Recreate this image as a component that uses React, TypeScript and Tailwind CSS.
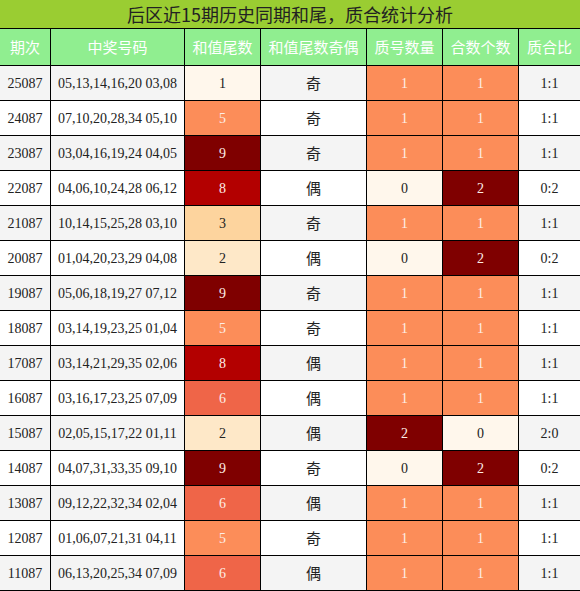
import React from "react";

type Row = {
  issue: string;
  nums: string;
  tail: number;
  parity: string;
  prime: number;
  comp: number;
};

const rows: Row[] = [
  { issue: "25087", nums: "05,13,14,16,20 03,08", tail: 1, parity: "奇", prime: 1, comp: 1 },
  { issue: "24087", nums: "07,10,20,28,34 05,10", tail: 5, parity: "奇", prime: 1, comp: 1 },
  { issue: "23087", nums: "03,04,16,19,24 04,05", tail: 9, parity: "奇", prime: 1, comp: 1 },
  { issue: "22087", nums: "04,06,10,24,28 06,12", tail: 8, parity: "偶", prime: 0, comp: 2 },
  { issue: "21087", nums: "10,14,15,25,28 03,10", tail: 3, parity: "奇", prime: 1, comp: 1 },
  { issue: "20087", nums: "01,04,20,23,29 04,08", tail: 2, parity: "偶", prime: 0, comp: 2 },
  { issue: "19087", nums: "05,06,18,19,27 07,12", tail: 9, parity: "奇", prime: 1, comp: 1 },
  { issue: "18087", nums: "03,14,19,23,25 01,04", tail: 5, parity: "奇", prime: 1, comp: 1 },
  { issue: "17087", nums: "03,14,21,29,35 02,06", tail: 8, parity: "偶", prime: 1, comp: 1 },
  { issue: "16087", nums: "03,16,17,23,25 07,09", tail: 6, parity: "偶", prime: 1, comp: 1 },
  { issue: "15087", nums: "02,05,15,17,22 01,11", tail: 2, parity: "偶", prime: 2, comp: 0 },
  { issue: "14087", nums: "04,07,31,33,35 09,10", tail: 9, parity: "奇", prime: 0, comp: 2 },
  { issue: "13087", nums: "09,12,22,32,34 02,04", tail: 6, parity: "偶", prime: 1, comp: 1 },
  { issue: "12087", nums: "01,06,07,21,31 04,11", tail: 5, parity: "奇", prime: 1, comp: 1 },
  { issue: "11087", nums: "06,13,20,25,34 07,09", tail: 6, parity: "偶", prime: 1, comp: 1 },
];

// OrRd scale, one class per tail digit
const tailColor: Record<number, string> = {
  0: "bg-[#fff7ec] text-[#222]",
  1: "bg-[#fff7ec] text-[#222]",
  2: "bg-[#fee8c8] text-[#222]",
  3: "bg-[#fdd49e] text-[#222]",
  4: "bg-[#fdbb84] text-[#222]",
  5: "bg-[#fc8d59] text-[#fdeee6]",
  6: "bg-[#ef6548] text-[#fdeee6]",
  7: "bg-[#d7301f] text-[#fdeee6]",
  8: "bg-[#b30000] text-[#fdeee6]",
  9: "bg-[#7f0000] text-[#fdeee6]",
};

const countColor: Record<number, string> = {
  0: "bg-[#fff7ec] text-[#222]",
  1: "bg-[#fc8d59] text-[#fdeee6]",
  2: "bg-[#7f0000] text-[#fdeee6]",
};

const headers = ["期次", "中奖号码", "和值尾数", "和值尾数奇偶", "质号数量", "合数个数", "质合比"];

const serif = "font-['Liberation_Serif','Noto_Sans_CJK_SC',serif]";
const sans = "font-['Noto_Sans_CJK_SC','Noto_Sans',sans-serif]";

const App = () => {
  return (
    <div className="w-[580px] h-[591px] bg-black flex flex-col gap-px">
      <div
        className={`h-[28px] bg-[#9acd32] flex items-center justify-center text-[18px] text-[#222] ${sans}`}
      >
        后区近15期历史同期和尾，质合统计分析
      </div>

      <div className="grid grid-cols-[50px_133px_75px_105px_75px_75px_61px] gap-px">
        {headers.map((h) => (
          <div
            key={h}
            className={`h-[36px] bg-[#90ee90] text-white text-[15px] flex items-center justify-center ${sans}`}
          >
            {h}
          </div>
        ))}
      </div>

      {rows.map((r, i) => {
        const stripe = i % 2 === 0 ? "bg-[#f4f4f4]" : "bg-white";
        const cell = "h-[34px] flex items-center justify-center";
        return (
          <div
            key={r.issue}
            className={`grid grid-cols-[50px_133px_75px_105px_75px_75px_61px] gap-px text-[14px] text-[#222] ${serif}`}
          >
            <div className={`${cell} ${stripe}`}>{r.issue}</div>
            <div className={`${cell} ${stripe}`}>{r.nums}</div>
            <div className={`${cell} ${tailColor[r.tail]}`}>{r.tail}</div>
            <div className={`${cell} ${stripe} text-[15px] ${sans}`}>{r.parity}</div>
            <div className={`${cell} ${countColor[r.prime]}`}>{r.prime}</div>
            <div className={`${cell} ${countColor[r.comp]}`}>{r.comp}</div>
            <div className={`${cell} ${stripe}`}>
              {r.prime}:{r.comp}
            </div>
          </div>
        );
      })}
    </div>
  );
};

export default App;
